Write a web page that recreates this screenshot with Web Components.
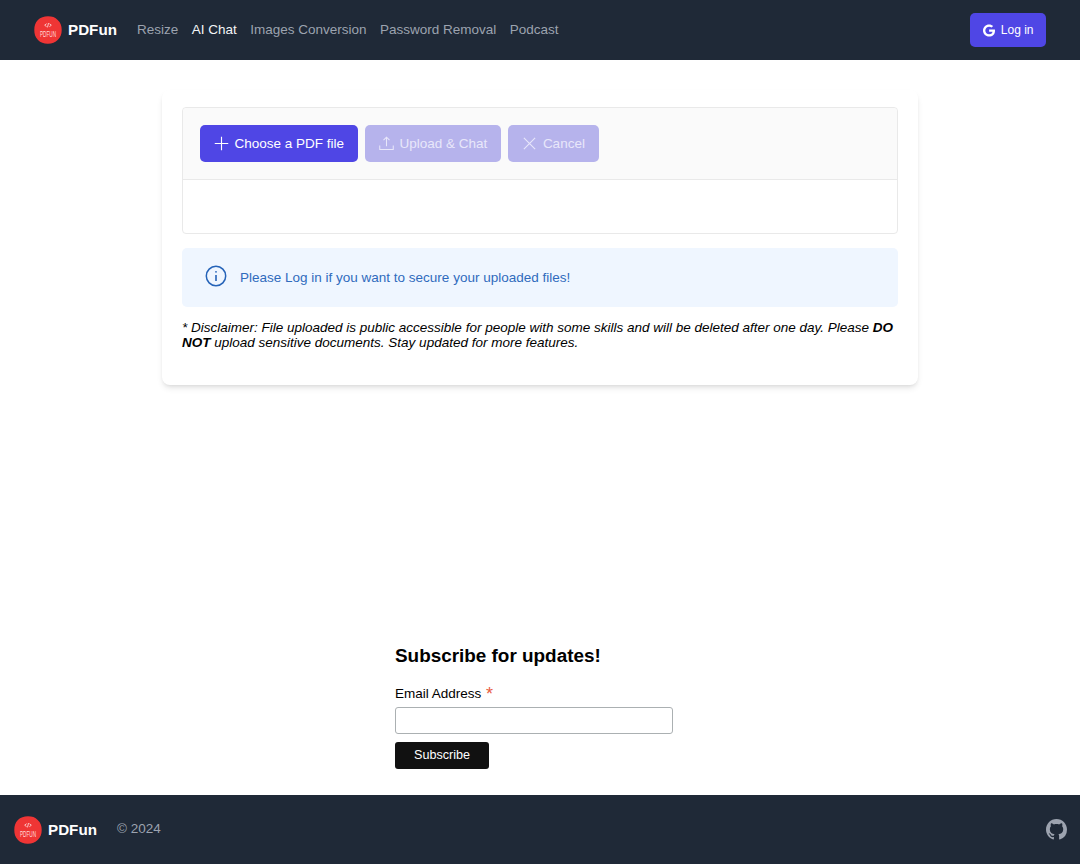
<!DOCTYPE html>
<html lang="en">
<head>
<meta charset="utf-8">
<title>PDFun</title>
<style>
    html, body { margin: 0; height: 100%; }
    body { font-family: "Liberation Sans", Arial, sans-serif; background: #fff; }
</style>
</head>
<body>
<pdf-app></pdf-app>
<script>
const LOGO_SVG = `
    <svg viewBox="0 0 28 28" width="28" height="28">
        <path d="M14 .3c4 0 7.300 1 9.700 3.600 2.900 2.500 4 6 4 10 0 4.100-1.200 7.300-3.800 9.900-2.500 2.700-5.900 3.900-9.900 3.900-4 .1-7.400-1.200-10-3.800C1.300 21.300.2 18 .3 14c0-4 1-7.400 3.600-10C6.500 1.500 10 .3 14 .3z" fill="#ef3535"/>
        <path d="M12.600 7.700l-1.900 1.500 1.900 1.500M15.400 7.700l1.900 1.500-1.900 1.500M14.500 7l-1 4.400" fill="none" stroke="#fff" stroke-width=".7"/>
        <text transform="translate(14 21) scale(.72 1.400)" text-anchor="middle" font-family="'Liberation Sans',sans-serif" font-size="6.500" fill="#ffd9d9">PDFUN</text>
    </svg>`;

class PdfBrand extends HTMLElement {
    constructor () {
        super();
        this.attachShadow({ mode: 'open' }).innerHTML = `
            <style>
                :host { display: flex; align-items: center; gap: 6px; }
                svg { display: block; }
                span { font: 700 15.200px/24px "Liberation Sans", Arial, sans-serif; color: #fff; }
            </style>
            ${LOGO_SVG}
            <span>PDFun</span>`;
    }
}
customElements.define('pdf-brand', PdfBrand);

class PdfHeader extends HTMLElement {
    constructor () {
        super();
        this.attachShadow({ mode: 'open' }).innerHTML = `
            <style>
                :host { display: flex; align-items: center; height: 60px; padding: 0 34px; background: #1f2937; }
                nav { display: flex; gap: 13.500px; margin-left: 20px; }
                a { font: 400 13.500px/20px "Liberation Sans", Arial, sans-serif; color: #9ca3af; text-decoration: none; }
                a.active { color: #f3f4f6; }
                button {
                    margin-left: auto; display: flex; align-items: center; gap: 6px;
                    height: 34px; padding: 0 12.500px; box-sizing: border-box; white-space: nowrap;
                    border: 0; border-radius: 5px; background: #4f46e5; color: #fff;
                    font: 400 12px/16px "Liberation Sans", Arial, sans-serif;
                }
            </style>
            <pdf-brand></pdf-brand>
            <nav>
                <a href="#">Resize</a>
                <a href="#" class="active">AI Chat</a>
                <a href="#">Images Conversion</a>
                <a href="#">Password Removal</a>
                <a href="#">Podcast</a>
            </nav>
            <button>
                <svg viewBox="0 0 488 512" width="12" height="13" fill="#fff"><path d="M488 261.800C488 403.300 391.100 504 248 504 110.800 504 0 393.200 0 256S110.800 8 248 8c66.800 0 123 24.500 166.300 64.900l-67.500 64.900C258.500 52.600 94.300 116.600 94.300 256c0 86.500 69.100 156.600 153.700 156.600 98.200 0 135-70.400 140.800-106.900H248v-85.300h236.100c2.300 12.700 3.900 24.900 3.900 41.400z"/></svg>
                Log in
            </button>`;
    }
}
customElements.define('pdf-header', PdfHeader);

class PdfButton extends HTMLElement {
    constructor () {
        super();
        this.attachShadow({ mode: 'open' }).innerHTML = `
            <style>
                :host { display: flex; align-items: center; gap: 5.500px; height: 37px; padding: 0 14px; box-sizing: border-box; border-radius: 5px; background: #4f46e5; color: #fff; font: 400 13.500px/20px "Liberation Sans", Arial, sans-serif; }
                :host([disabled]) { background: #b6b3ec; color: #e8e7fa; }
                ::slotted(svg) { display: block; }
            </style>
            <slot name="icon"></slot><slot></slot>`;
    }
}
customElements.define('pdf-button', PdfButton);

class PdfUploader extends HTMLElement {
    constructor () {
        super();
        this.attachShadow({ mode: 'open' }).innerHTML = `
            <style>
                :host { display: block; border: 1px solid #e9e9e9; border-radius: 4px; }
                .bar { display: flex; gap: 7px; padding: 17px; background: #fafafa; border-bottom: 1px solid #e9e9e9; border-radius: 4px 4px 0 0; }
                .body { height: 53px; }
            </style>
            <div class="bar">
                <pdf-button>
                    <svg slot="icon" viewBox="0 0 16 16" width="15" height="15" fill="none" stroke="currentColor" stroke-width="1.200"><path d="M8 .8v14.400M.8 8h14.400"/></svg>
                    Choose a PDF file
                </pdf-button>
                <pdf-button disabled>
                    <svg slot="icon" viewBox="0 0 16 16" width="15" height="15" fill="none" stroke="currentColor" stroke-width="1.100"><path d="M8 11V1.500M4.800 4.500L8 1.300l3.200 3.200M.8 10v4.500h14.400V10"/></svg>
                    Upload &amp; Chat
                </pdf-button>
                <pdf-button disabled>
                    <svg slot="icon" viewBox="0 0 16 16" width="15" height="15" fill="none" stroke="currentColor" stroke-width="1.200"><path d="M2 2l12 12M14 2L2 14"/></svg>
                    Cancel
                </pdf-button>
            </div>
            <div class="body"></div>`;
    }
}
customElements.define('pdf-uploader', PdfUploader);

class PdfAlert extends HTMLElement {
    constructor () {
        super();
        this.attachShadow({ mode: 'open' }).innerHTML = `
            <style>
                :host { display: flex; align-items: center; gap: 13px; height: 59px; margin-top: 14px; padding: 0 23px; border-radius: 5px; background: #eff6ff; color: #2f6bbd; font: 400 13.500px/20px "Liberation Sans", Arial, sans-serif; }
                svg { display: block; margin-top: -4px; }
            </style>
            <svg viewBox="0 0 22 22" width="22" height="22" fill="none" stroke="#2563b8" stroke-width="1.500">
                <circle cx="11" cy="11" r="9.700"/>
                <path d="M11 10v6" stroke-width="1.600"/>
                <circle cx="11" cy="6.800" r=".9" fill="#2563b8" stroke="none"/>
            </svg>
            <span><slot></slot></span>`;
    }
}
customElements.define('pdf-alert', PdfAlert);

class PdfCard extends HTMLElement {
    constructor () {
        super();
        this.attachShadow({ mode: 'open' }).innerHTML = `
            <style>
                :host { display: block; width: 756px; box-sizing: border-box; margin: 30px auto 0; padding: 17px 20px 35px; background: #fff; border-radius: 8px; box-shadow: 0 4px 6px -1px rgba(0,0,0,.1), 0 2px 4px -2px rgba(0,0,0,.1); }
                p { margin: 13px 0 0; font: italic 400 13.500px/15px "Liberation Sans", Arial, sans-serif; color: #000; }
                b { font-weight: 700; }
            </style>
            <pdf-uploader></pdf-uploader>
            <pdf-alert>Please Log in if you want to secure your uploaded files!</pdf-alert>
            <p>* Disclaimer: File uploaded is public accessible for people with some skills and will be deleted after one day. Please <b>DO NOT</b> upload sensitive documents. Stay updated for more features.</p>`;
    }
}
customElements.define('pdf-card', PdfCard);

class PdfSubscribe extends HTMLElement {
    constructor () {
        super();
        this.attachShadow({ mode: 'open' }).innerHTML = `
            <style>
                :host { display: block; width: 290px; margin: auto auto 0; padding: 0 0 26px; font-family: "Liberation Sans", Arial, sans-serif; color: #000; }
                h2 { margin: 0; font: 700 18.900px/24px "Liberation Sans", Arial, sans-serif; }
                label { display: block; margin-top: 17px; font-size: 13.500px; line-height: 18px; }
                label i { font-style: normal; font-size: 18px; line-height: 14px; vertical-align: -2px; color: #e85c41; margin-left: 1px; }
                input { display: block; box-sizing: border-box; width: 278px; height: 27px; margin-top: 4px; padding: 0 8px; border: 1px solid #abb0b2; border-radius: 3px; background: #fff; }
                button { display: block; width: 94px; height: 27px; margin-top: 8px; padding: 0; border: 0; border-radius: 3px; background: #111; color: #fff; font: 400 12.600px/27px "Liberation Sans", Arial, sans-serif; }
            </style>
            <h2>Subscribe for updates!</h2>
            <label>Email Address <i>*</i></label>
            <input type="email">
            <button>Subscribe</button>`;
    }
}
customElements.define('pdf-subscribe', PdfSubscribe);

class PdfFooter extends HTMLElement {
    constructor () {
        super();
        this.attachShadow({ mode: 'open' }).innerHTML = `
            <style>
                :host { display: flex; align-items: center; height: 69px; padding: 0 13px 0 14px; background: #1f2937; }
                span { margin: -2px 0 0 20px; font: 400 13.500px/20px "Liberation Sans", Arial, sans-serif; color: #9ca3af; }
                svg { display: block; margin-left: auto; }
            </style>
            <pdf-brand></pdf-brand>
            <span>© 2024</span>
            <svg viewBox="0 0 16 16" width="21" height="21" fill="#9ca3af"><path fill-rule="evenodd" d="M8 0C3.580 0 0 3.580 0 8c0 3.540 2.290 6.530 5.470 7.590.4.070.55-.17.55-.38 0-.19-.01-.82-.01-1.490-2.010.37-2.530-.49-2.690-.94-.09-.23-.48-.94-.82-1.130-.28-.15-.68-.52-.01-.53.63-.01 1.080.58 1.230.82.72 1.210 1.870.87 2.330.66.070-.52.28-.87.51-1.070-1.780-.2-3.640-.89-3.640-3.950 0-.87.31-1.590.82-2.150-.08-.2-.36-1.020.08-2.120 0 0 .67-.21 2.200.82.64-.18 1.320-.27 2-.27.68 0 1.360.09 2 .27 1.530-1.040 2.200-.82 2.200-.82.44 1.100.16 1.920.08 2.120.51.56.82 1.270.82 2.150 0 3.070-1.870 3.750-3.650 3.950.29.250.54.730.54 1.480 0 1.070-.01 1.930-.01 2.200 0 .21.15.46.55.38A8.013 8.013 0 0016 8c0-4.420-3.580-8-8-8z"/></svg>`;
    }
}
customElements.define('pdf-footer', PdfFooter);

class PdfApp extends HTMLElement {
    constructor () {
        super();
        this.attachShadow({ mode: 'open' }).innerHTML = `
            <style>
                :host { display: flex; flex-direction: column; height: 864px; overflow: hidden; }
                main { flex: 1; display: flex; flex-direction: column; }
            </style>
            <pdf-header></pdf-header>
            <main>
                <pdf-card></pdf-card>
                <pdf-subscribe></pdf-subscribe>
            </main>
            <pdf-footer></pdf-footer>`;
    }
}
customElements.define('pdf-app', PdfApp);
</script>
</body>
</html>
